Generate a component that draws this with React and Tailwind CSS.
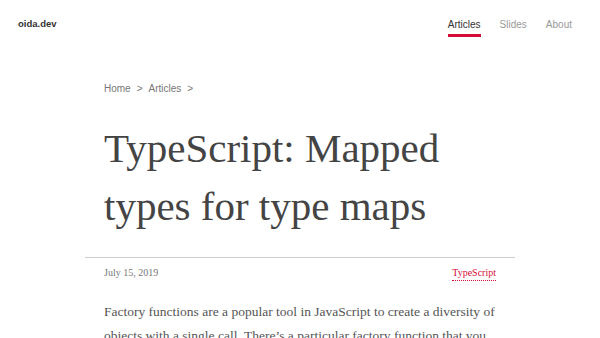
import React from "react";

const navItems = [
  { label: "Articles", active: true },
  { label: "Slides" },
  { label: "About" },
];

const Header = () => (
  <header className="flex items-start justify-between h-[59px] pl-[18px] pr-[28px] font-['Liberation_Sans',Arial,sans-serif]">
    <a className="mt-[18px] text-[9.5px] font-bold text-[#333] leading-[12px]">oida.dev</a>
    <nav className="flex gap-[19px] mt-[16px]">
      {navItems.map((item) => (
        <a
          key={item.label}
          className={`text-[10px] leading-[15px] pt-[1px] pb-[2px] border-b-[3px] ${
            item.active ? "text-[#333] border-[#d50c37]" : "text-[#999] border-transparent"
          }`}
        >
          {item.label}
        </a>
      ))}
    </nav>
  </header>
);

export default function App() {
  return (
    <div className="h-screen bg-white overflow-hidden">
      <Header />
      <main className="w-[430px] mx-auto">
        <div className="px-[19px]">
          <div className="flex gap-[6px] text-[10px] text-[#777] font-['Liberation_Sans',Arial,sans-serif] leading-[14px] mt-[23px]">
            <span>Home</span>
            <span>&gt;</span>
            <span>Articles</span>
            <span>&gt;</span>
          </div>
          <h1 className="mt-[23px] text-[41px] leading-[58px] text-[#444] font-['Liberation_Serif',serif]">
            TypeScript: Mapped types for type maps
          </h1>
        </div>
        <div className="mt-[22px] border-t border-[#ccc]" />
        <div className="flex justify-between px-[19px] mt-[8px] text-[10px] leading-[14px] font-['Liberation_Serif',serif]">
          <span className="text-[#777]">July 15, 2019</span>
          <a className="text-[#d50c37] border-b border-dotted border-[#d50c37]">TypeScript</a>
        </div>
        <p className="px-[19px] mt-[19px] text-[13.5px] leading-[24px] text-[#555] font-['Liberation_Serif',serif]">
          Factory functions are a popular tool in JavaScript to create a diversity of objects with a single call. There’s a particular factory function that you might have used at some point.
        </p>
      </main>
    </div>
  );
}
